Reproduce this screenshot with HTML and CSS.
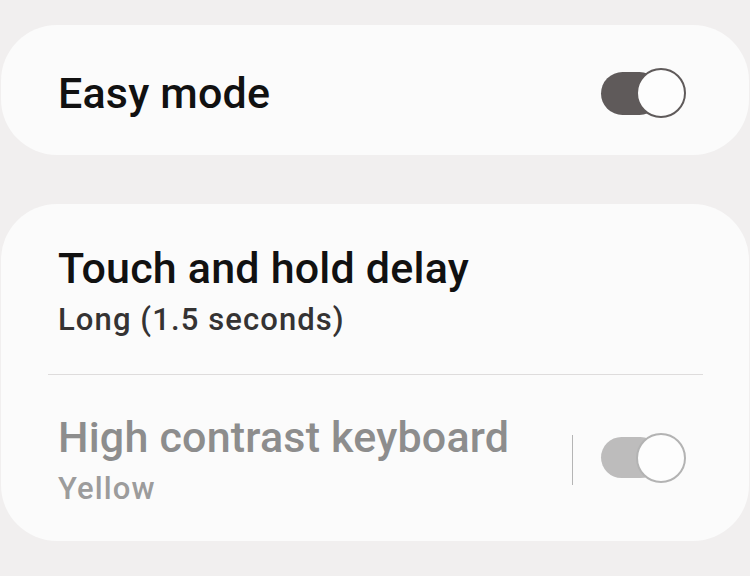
FILE: index.html
```html
<!DOCTYPE html>
<html>
<head>
<meta charset="utf-8">
<link rel="stylesheet" href="styles.css">
</head>
<body>
<div class="screen">
  <section class="card card-single">
    <div class="row row-easy">
      <div class="title">Easy mode</div>
      <div class="toggle on"><span class="track"></span><span class="knob"></span></div>
    </div>
  </section>
  <section class="card card-list">
    <div class="row row-delay">
      <div class="texts">
        <div class="title">Touch and hold delay</div>
        <div class="sub">Long (1.5 seconds)</div>
      </div>
    </div>
    <div class="divider"></div>
    <div class="row row-contrast disabled">
      <div class="texts">
        <div class="title">High contrast keyboard</div>
        <div class="sub">Yellow</div>
      </div>
      <div class="controls">
        <span class="vline"></span>
        <div class="toggle on dim"><span class="track"></span><span class="knob"></span></div>
      </div>
    </div>
  </section>
</div>
</body>
</html>
```
FILE: styles.css
```css
html, body {
  margin: 0;
  padding: 0;
  background: #f1efef;
  font-family: Roboto, "Noto Sans", "Liberation Sans", sans-serif;
}
.screen {
  width: 750px;
  height: 576px;
  display: flex;
  flex-direction: column;
  padding-top: 25px;
  gap: 49px;
  box-sizing: border-box;
  overflow: hidden;
}
.card {
  background: #fbfbfb;
  border-radius: 56px;
  margin: 0 1px;
}
.row {
  display: flex;
  align-items: center;
  justify-content: space-between;
  padding: 0 63px 0 57px;
}
.title {
  font-size: 43px;
  line-height: 50px;
  font-weight: 500;
  color: #111;
  letter-spacing: 0.2px;
}
.sub {
  font-size: 31px;
  line-height: 36px;
  font-weight: 500;
  color: #353333;
  margin-top: 9px;
  letter-spacing: 1.1px;
}
.row-easy {
  height: 130px;
  padding-top: 6px;
  box-sizing: border-box;
}
.row-delay {
  padding-top: 39px;
  padding-bottom: 36px;
}
.divider {
  height: 1px;
  background: #dedcdc;
  margin: 0 46px 0 47px;
}
.row-contrast {
  padding-top: 37px;
  padding-bottom: 34px;
}
.disabled .title { color: #8d8d8d; }
.disabled .sub { color: #9c9c9c; }
.controls {
  display: flex;
  align-items: center;
  gap: 28px;
}
.vline {
  width: 1px;
  height: 50px;
  background: #b5b5b5;
}
.toggle {
  position: relative;
  width: 85px;
  height: 50px;
  display: flex;
  align-items: center;
}
.track {
  width: 60px;
  height: 43px;
  border-radius: 22px;
  background: #5f5a5a;
}
.knob {
  position: absolute;
  right: 0;
  top: 0;
  width: 50px;
  height: 50px;
  box-sizing: border-box;
  border-radius: 50%;
  background: #fdfdfd;
  border: 2px solid #5f5a5a;
}
.toggle.dim .track { background: #bdbcbc; height: 41px; }
.toggle.dim .knob { border-color: #b3b3b3; }
.row-contrast .toggle { margin-top: -4px; }
```
